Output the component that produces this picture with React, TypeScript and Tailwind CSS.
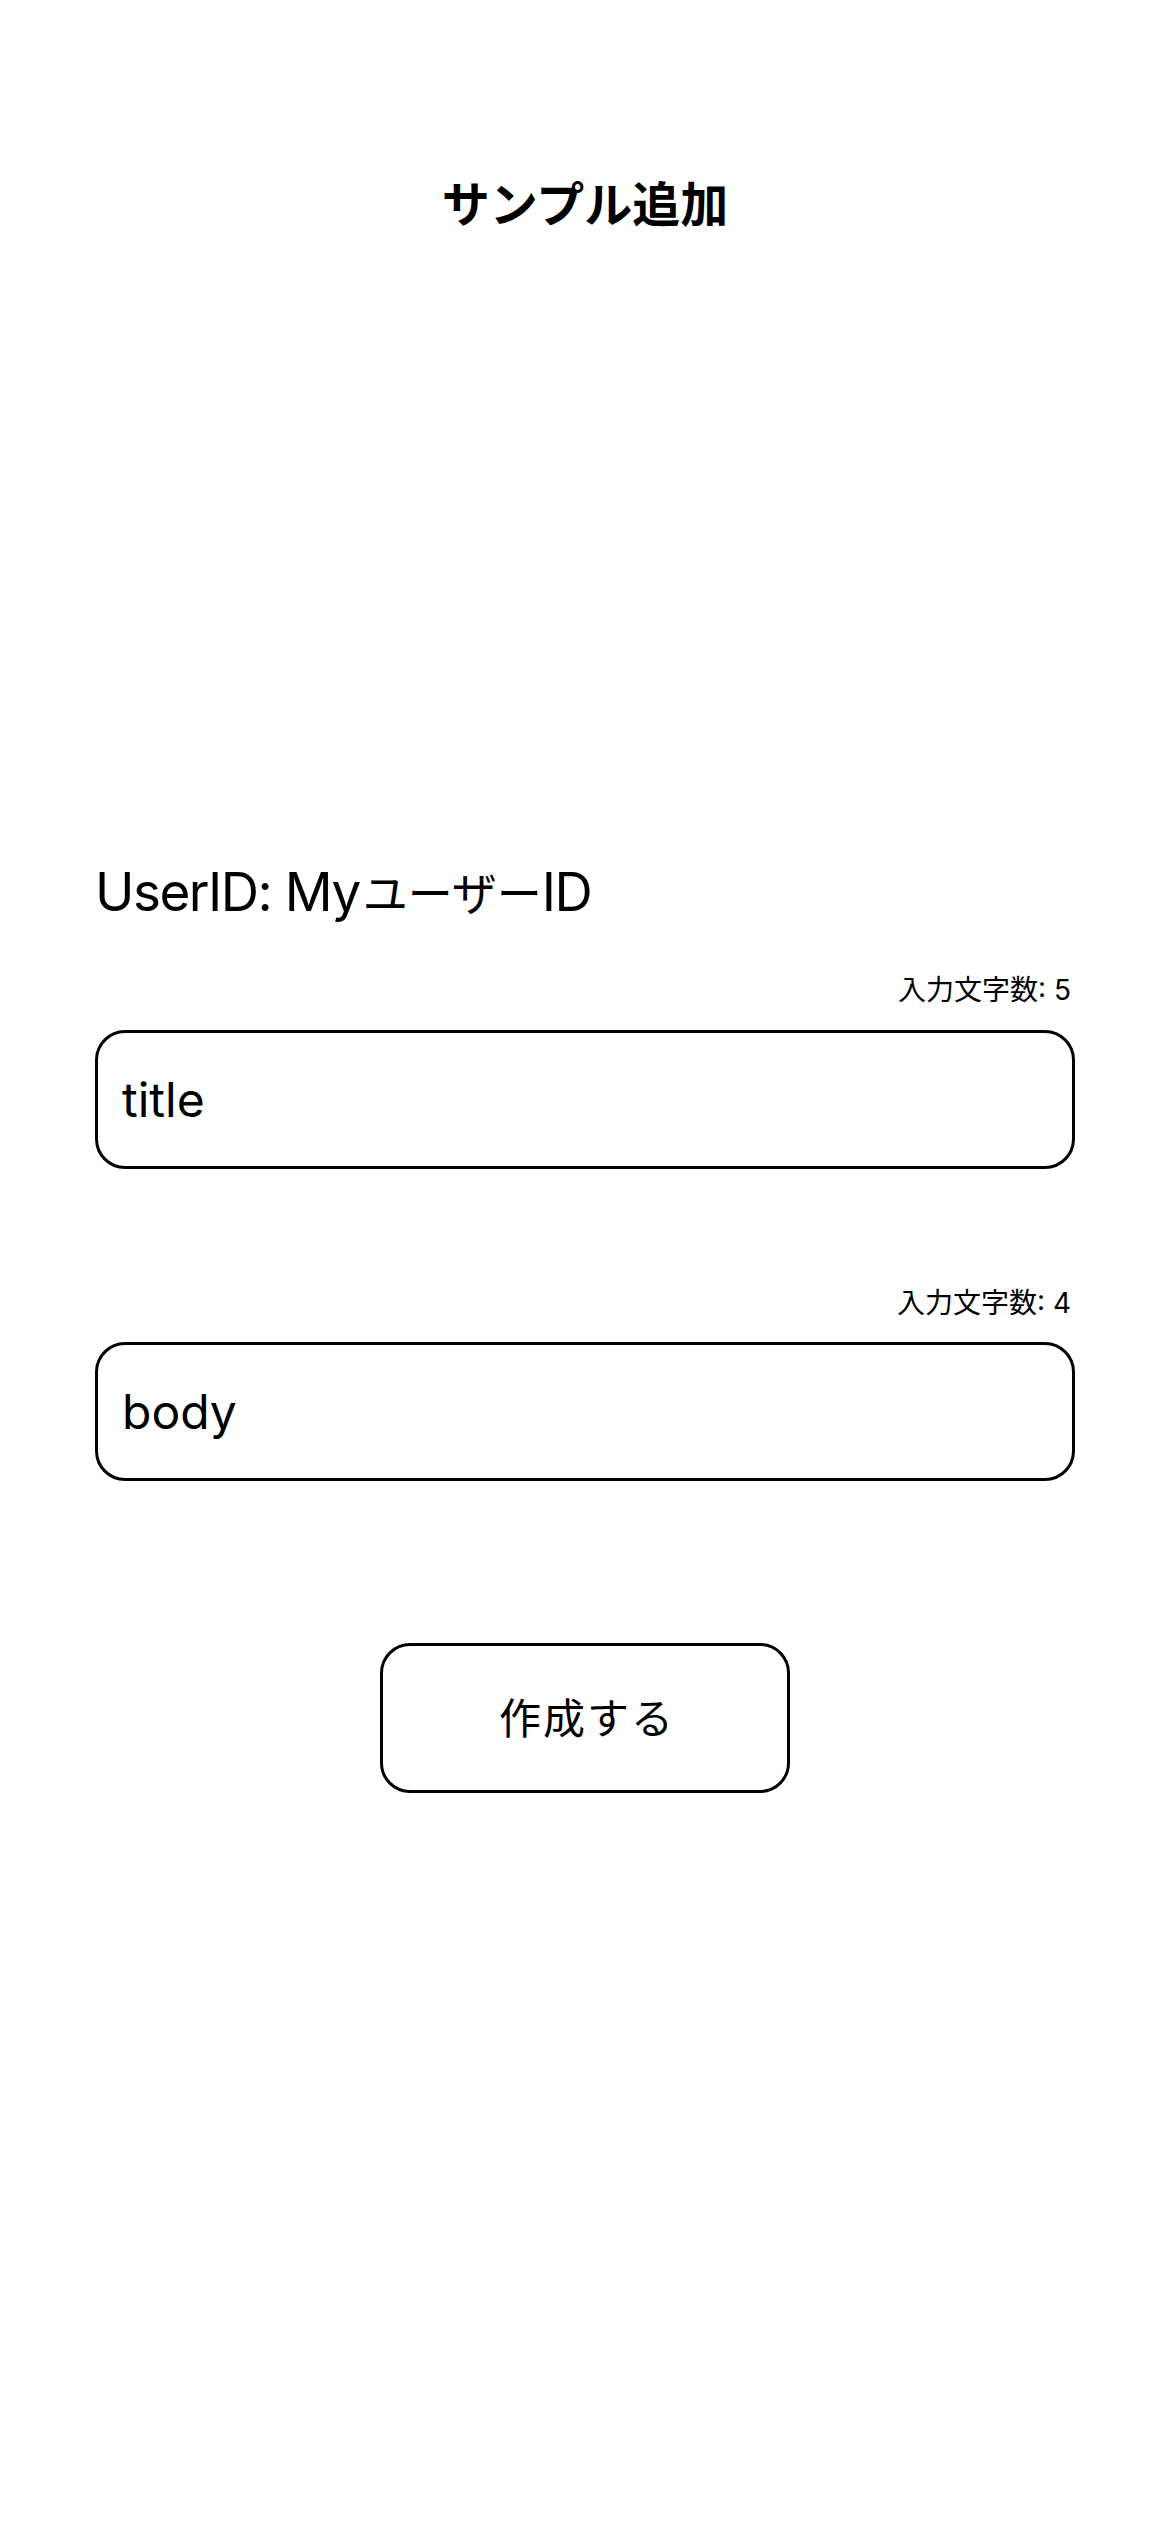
import { useState } from 'react';

export default function App() {
  const [title, setTitle] = useState('title');
  const [body, setBody] = useState('body');

  return (
    <div className="min-h-[2532px] bg-white px-[95px] text-black font-['Inter','Noto_Sans_CJK_JP',sans-serif]">
      {/* header */}
      <h1 className="pt-[176px] text-center text-[48px] font-bold leading-[58px]">サンプル追加</h1>

      <p className="mt-[627px] h-[62px] text-[53px] leading-[62px] tracking-[-1.5px]">
        UserID: My<span className="ml-[3px] text-[45px] tracking-[0px]">ユーザー</span>ID
      </p>

      {/* title */}
      <p className="mt-[50px] pr-[4px] text-right text-[28px] leading-[34px]">入力文字数: {title.length}</p>
      <input
        value={title}
        onChange={(e) => setTitle(e.target.value)}
        className="mt-[23px] block h-[139px] w-full rounded-[30px] border-[3px] border-black px-[24px] text-[48px] outline-none"
      />

      {/* body */}
      <p className="mt-[117px] pr-[4px] text-right text-[28px] leading-[34px]">入力文字数: {body.length}</p>
      <input
        value={body}
        onChange={(e) => setBody(e.target.value)}
        className="mt-[22px] block h-[139px] w-full rounded-[30px] border-[3px] border-black px-[24px] text-[48px] outline-none"
      />

      <div className="mt-[162px] flex justify-center">
        <button className="h-[150px] w-[410px] rounded-[30px] border-[3px] border-black bg-white pl-[4px] text-[42px] tracking-[2px]">
          作成する
        </button>
      </div>
    </div>
  );
}
